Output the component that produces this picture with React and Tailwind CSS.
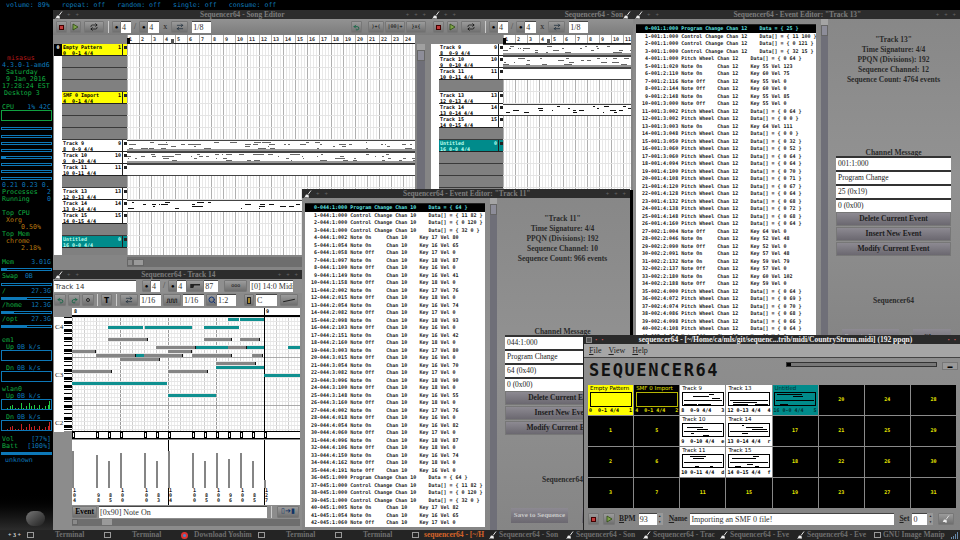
import { Repeat, Search, ArrowRightLeft, Undo2, Redo2 } from "lucide-react";

const mono = "font-['DejaVu_Sans_Mono',monospace]";
const serif = "font-['Liberation_Serif',serif]";

// small seeded random so the pattern scribbles stay the same each render
function rnd(seed) {
    let s = seed;
    return () => {
        s = (s * 9301 + 49297) % 233280;
        return s / 233280;
    };
}

const range = (n) => Array.from({ length: n }, (_, i) => i);

function BrushIcon() {
    return (
        <svg width="8" height="8" viewBox="0 0 8 8" className="shrink-0">
            <path d="M7 0.5 L4 4.5" stroke="#ddd" strokeWidth="1" />
            <path d="M0.5 7.5 L2 4.5 L4.5 5 L5 7.5 Z" fill="#eee" />
            <rect x="0" y="7" width="3" height="1" fill="#777" />
        </svg>
    );
}

function TitleBar({ text, right }) {
    return (
        <div className="h-[9px] shrink-0 bg-[#2c2c2c] flex items-center px-[2px] relative">
            <BrushIcon />
            <span className="text-[#666] text-[6px] ml-[4px] leading-none">+</span>
            <span className="text-[#666] text-[6px] ml-[5px] leading-none">+</span>
            <span className={`${serif} flex-1 font-bold text-[7.4px] leading-[9px] text-[#7c7c7c] whitespace-nowrap ${right ? "text-right" : "text-center"}`}>{text}</span>
            {right ? (
                <BrushIcon />
            ) : (
                <>
                    <span className="text-[#666] text-[6px] mr-[5px] leading-none">+</span>
                    <span className="text-[#666] text-[6px] mr-[5px] leading-none">+</span>
                    <span className="text-[#666] text-[6px] mr-[2px] leading-none">+</span>
                </>
            )}
        </div>
    );
}

function Btn({ className = "", children }) {
    return (
        <div className={`h-[12px] shrink-0 rounded-[1px] bg-linear-to-b from-[#9c9c9c] to-[#6f6f6f] border border-[#777] flex items-center justify-center text-black ${className}`}>
            {children}
        </div>
    );
}

function Field({ className = "", children }) {
    return (
        <div className={`h-[12px] shrink-0 bg-white border-t border-[#444] pl-[1px] ${serif} text-[8px] leading-[11px] text-[#333] whitespace-nowrap overflow-hidden ${className}`}>
            {children}
        </div>
    );
}

function StopBtn({ className = "" }) {
    return (
        <Btn className={className}>
            <div className="w-[5px] h-[5px] bg-[#c23a3a] border border-[#400]" />
        </Btn>
    );
}

function PlayBtn({ className = "" }) {
    return (
        <Btn className={className}>
            <svg width="7" height="8" viewBox="0 0 7 8">
                <path d="M1 1 L6 4 L1 7 Z" fill="#7ea34a" stroke="#2d4a12" strokeWidth="0.8" />
            </svg>
        </Btn>
    );
}

function SongToolbar({ right }) {
    return (
        <div className="h-[16px] shrink-0 flex items-center pl-[3px] bg-linear-to-b from-[#929292] to-[#7c7c7c]">
            <StopBtn className="w-[11px]" />
            <PlayBtn className="w-[11px] ml-[3px]" />
            <Btn className="w-[20px] ml-[3px]"><Repeat size={8} strokeWidth={2} /></Btn>
            <div className="w-[1px] h-[12px] bg-[#ccc] ml-[4px]" />
            <Btn className="w-[9px] ml-[3px] text-[6px]">●</Btn>
            <Field className="w-[10px]">4</Field>
            <span className={`${serif} text-[8px] text-[#444] mx-[3px]`}>/</span>
            <Btn className="w-[9px] text-[6px]">●</Btn>
            <Field className="w-[11px]">4</Field>
            <span className={`${serif} text-[8px] text-[#222] mx-[4px]`}>x</span>
            <Btn className="w-[17px]"><ArrowRightLeft size={8} strokeWidth={2} color="#123" /></Btn>
            <Field className="w-[19px] ml-[4px]">1/8</Field>
            {right}
        </div>
    );
}

function TrackRow({ row }) {
    if (!row.name) {
        return <div className="h-[12px] bg-[#808080] border-b border-[#3a3a3a]" />;
    }
    const bg = row.color === "yellow" ? "bg-[#ffff00]" : row.color === "teal" ? "bg-[#008b8b]" : "bg-white";
    const fg = row.color === "teal" ? "text-[#bfe]" : "text-black";
    return (
        <div className={`h-[12px] flex border-b border-[#222] ${bg} ${fg} ${mono} font-bold text-[5px] leading-[5.5px] whitespace-pre`}>
            <div className="flex-1 pl-[1px] pt-[1px] overflow-hidden">
                <div className="flex justify-between pr-[1px]"><span>{row.name}</span><span>{row.num}</span></div>
                <div>{row.meta}</div>
            </div>
            <div className="w-[5px] border-l border-[#222] flex justify-center pt-[2px]">
                <div className="w-[3px] h-[3px] bg-[#222]" />
            </div>
        </div>
    );
}

function SongGrid({ w, h, rows, seed }) {
    const r = rnd(seed);
    return (
        <svg width={w} height={h} shapeRendering="crispEdges" className="block">
            <rect width={w} height={h} fill="#fff" />
            {range(Math.ceil(w / 3)).map((i) => (
                <rect key={"v" + i} x={i * 3} y="0" width="1" height={h} fill={i % 4 === 0 ? "#b0b0b0" : "#e8e8e8"} />
            ))}
            {range(Math.ceil(h / 12)).map((i) => (
                <rect key={"h" + i} x="0" y={i * 12 + 11} width={w} height="1" fill="#e4e4e4" />
            ))}
            {rows.map((row, idx) => {
                if (!row.strip) return null;
                const y = idx * 12;
                const pieces = [];
                if (row.strip !== "plain") {
                    const count = row.strip === "dense" ? w / 5 : w / 6;
                    for (let i = 0; i < count; i++) {
                        const px = Math.floor(r() * w);
                        const py = y + 2 + 2 * Math.floor(r() * 4);
                        const len = 1 + Math.floor(r() * (row.strip === "dense" ? 7 : 6));
                        pieces.push(<rect key={idx + "p" + i} x={px} y={py} width={len} height="1" fill={row.strip === "dense" ? "#666" : "#111"} />);
                    }
                }
                return (
                    <g key={idx}>
                        <rect x="0" y={y} width={w} height="12" fill="#fff" />
                        <rect x="0" y={y} width={w} height="1" fill="#444" />
                        <rect x="0" y={y + 11} width={w} height="1" fill="#444" />
                        {row.strip === "dense" && <rect x="0" y={y + 9} width={w} height="2" fill="#999" />}
                        {pieces}
                    </g>
                );
            })}
        </svg>
    );
}

function Ruler({ count, extra }) {
    return (
        <div className={`h-[9px] bg-white border-b border-[#222] flex ${mono} font-bold text-[5px] leading-[8px] text-[#333] relative`}>
            {range(count).map((i) => (
                <div key={i} className="w-[12px] shrink-0 border-l border-[#aaa] pl-[1px]">{i + 1}</div>
            ))}
            <div className="absolute left-0 top-[3px] w-[3px] h-[6px] bg-black" />
            {extra && <div className="absolute left-[44px] top-[4px] w-[3px] h-[5px] bg-[#555]" />}
        </div>
    );
}

const row = (name, num, meta, color, strip) => ({ name, num, meta, color, strip });
const EMPTY = {};
const T9 = row("Track 9", "9", "8  0-9 4/4", "white", "dense");
const T10 = row("Track 10", "10", "9  0-10 4/4", "white", "dense");
const T11 = row("Track 11", "11", "10 0-11 4/4", "white", "plain");
const T13 = row("Track 13", "13", "12 0-13 4/4", "white");
const T14 = row("Track 14", "14", "13 0-14 4/4", "white", "sparse");
const T15 = row("Track 15", "15", "14 0-15 4/4", "white");
const UNT = row("Untitled", "0", "16 0-0 4/4", "teal");

const SONG_ROWS = [
    row("Empty Pattern", "1", "0  0-1 4/4", "yellow"), EMPTY, EMPTY, EMPTY,
    row("SMF 0 Import", "1", "4  0-1 4/4", "yellow"), EMPTY, EMPTY, EMPTY,
    T9, T10, T11, EMPTY, T13, T14, T15, EMPTY, UNT, EMPTY,
];
const SONG2_ROWS = [T9, T10, T11, EMPTY, T13, T14, T15, EMPTY, UNT, EMPTY, EMPTY, EMPTY];

function SongEditor() {
    return (
        <div className="absolute left-[53px] top-[10px] w-[377px] h-[260px] flex flex-col bg-[#858585]">
            <TitleBar text="Sequencer64 - Song Editor" />
            <SongToolbar
                right={
                    <div className="ml-auto mr-[4px] flex items-center gap-[1px]">
                        <Btn className="w-[11px]"><Undo2 size={7} color="#164" strokeWidth={3} /></Btn>
                        <Btn className="w-[16px] ml-[5px]"><span className={`${mono} text-[5px]`}>)+(</span></Btn>
                        <Btn className="w-[20px]"><span className={`${mono} text-[5px]`}>|00|+</span></Btn>
                        <Btn className="w-[20px]"><span className={`${mono} text-[5px]`}>}x{"{"}</span></Btn>
                    </div>
                }
            />
            <div className="flex flex-1 min-h-0">
                <div className="w-[74px] shrink-0 flex">
                    <div className="w-[8px] mt-[9px] h-[211px] ml-[1px] bg-white">
                        <div className={`h-[12px] bg-black text-white ${mono} font-bold text-[5px] text-center leading-[7px]`}>0</div>
                    </div>
                    <div className="w-[65px] pt-[9px] h-[220px] overflow-hidden">
                        {SONG_ROWS.map((r, i) => <TrackRow key={i} row={r} />)}
                    </div>
                </div>
                <div className="w-[288px] shrink-0">
                    <Ruler count={24} extra />
                    <SongGrid w={288} h={211} rows={SONG_ROWS} seed={7} />
                    <div className="h-[10px] mt-[2px] bg-[#6e6e6e] flex items-center">
                        <div className="w-[6px] h-[7px] bg-[#8a8a8a] border border-[#666]" />
                        <div className="w-[11px] h-[7px] bg-[#9a9a9a] border border-[#666]" />
                    </div>
                </div>
                <div className="w-[8px] ml-[2px] mt-[9px] h-[221px] bg-[#6f6f78]">
                    <div className="h-[6px] bg-[#a0a0a0]" />
                    <div className="h-[11px] bg-[#8d8d99] border border-[#666]" />
                </div>
            </div>
        </div>
    );
}

function SongEditor2() {
    return (
        <div className="absolute left-[430px] top-[10px] w-[203px] h-[180px] flex flex-col bg-[#858585]">
            <TitleBar text="Sequencer64 - Son" right />
            <SongToolbar />
            <div className="flex flex-1 min-h-0">
                <div className="w-[8px] mt-[9px] ml-[1px] bg-white" />
                <div className="w-[64px] shrink-0 pt-[9px]">
                    {SONG2_ROWS.map((r, i) => <TrackRow key={i} row={r} />)}
                </div>
                <div className="w-[128px] shrink-0">
                    <Ruler count={11} extra />
                    <SongGrid w={128} h={146} rows={SONG2_ROWS} seed={21} />
                </div>
            </div>
        </div>
    );
}

const pad = (s, n) => String(s).padEnd(n, " ");

function on(t, k, v) { return [t, pad("Note On", 11), `Key ${k} Vel ${v}`]; }
function off(t, k) { return [t, pad("Note Off", 11), `Key ${k} Vel 0`]; }
function pw(t, a) { return [t, "Pitch Wheel", `Data[] = { 0 ${a} }`]; }
function cc(t, a, b) { return [t, "Control Change", `Data[] = { ${a} ${b} }`]; }
function pc(t, a) { return [t, "Program Change", `Data = { ${a} }`]; }

const TRACK13 = [
    pc("001:1:000", 25), cc("001:1:000", 11, 100), cc("001:1:000", 0, 121), cc("001:1:000", 32, 15),
    pw("001:1:000", 64), on("001:1:020", 55, 123), on("001:2:110", 60, 75), off("001:2:116", 55),
    off("001:2:144", 60), on("001:2:148", 55, 85), off("001:3:000", 55), pw("001:3:002", 64),
    pw("001:3:002", 0), on("001:3:003", 64, 111), pw("001:3:048", 0), pw("001:3:050", 32),
    pw("001:3:060", 52), pw("001:3:060", 64), pw("001:4:094", 64), pw("001:4:100", 70),
    pw("001:4:108", 71), pw("001:4:120", 67), pw("001:4:128", 64), pw("001:4:132", 68),
    pw("001:4:138", 72), pw("001:4:148", 68), pw("001:4:160", 64), off("002:1:004", 64),
    on("002:2:046", 52, 48), off("002:2:090", 52), on("002:2:091", 57, 48), on("002:2:132", 59, 79),
    off("002:2:137", 57), on("002:2:180", 60, 102), off("002:2:188", 59), pw("002:4:000", 64),
    pw("002:4:072", 69), pw("002:4:074", 70), pw("002:4:086", 68), pw("002:4:098", 66),
    pw("002:4:108", 64), off("002:4:150", 60),
];

const TRACK11 = [
    pc("044:1:000", 64), cc("044:1:000", 11, 82), cc("044:1:000", 0, 120), cc("044:1:000", 32, 0),
    on("044:1:002", 17, 80), on("044:1:054", 16, 65), off("044:1:058", 17), on("044:1:097", 18, 87),
    off("044:1:100", 16), on("044:1:149", 16, 41), off("044:1:158", 18), on("044:2:002", 17, 76),
    off("044:2:015", 18), on("044:2:054", 16, 74), off("044:2:082", 17), on("044:2:098", 18, 93),
    off("044:2:103", 16), on("044:2:151", 16, 42), off("044:2:160", 18), on("044:3:003", 17, 80),
    off("044:3:015", 16), on("044:3:054", 16, 70), off("044:3:082", 17), on("044:3:096", 18, 90),
    off("044:3:100", 18), on("044:3:148", 16, 55), off("044:3:160", 18), on("044:4:002", 17, 76),
    off("044:4:018", 16), on("044:4:054", 16, 82), off("044:4:060", 17), on("044:4:096", 18, 87),
    off("044:4:106", 18), on("044:4:150", 16, 74), off("044:4:162", 18), off("044:4:191", 16),
    pc("045:1:000", 64), cc("045:1:000", 11, 82), cc("045:1:000", 0, 120), cc("045:1:000", 32, 0),
    on("045:1:005", 17, 82), on("045:1:054", 16, 65), off("045:1:060", 17),
];

function PanelBtn({ children }) {
    return (
        <div className={`h-[14px] shrink-0 mb-[1px] bg-linear-to-b from-[#8d8a92] to-[#6b6870] border border-[#777] ${serif} font-bold text-[7.5px] leading-[12px] text-center text-[#1c1c1c] whitespace-nowrap`}>
            {children}
        </div>
    );
}

function EventEditor({ className, title, rows, chan, info, msg }) {
    return (
        <div className={`absolute flex flex-col bg-linear-to-b from-[#878787] via-[#929292] to-[#858585] ${className}`}>
            <TitleBar text={title} />
            <div className="flex flex-1 min-h-0 overflow-hidden">
                <div className={`w-[180px] h-fit shrink-0 ml-[3px] mt-[5px] border-t border-[#222] bg-white ${mono} font-bold text-[5px] leading-[7.5px] whitespace-pre text-[#1d1d1d]`}>
                    {rows.map((r, i) => (
                        <div key={i} className={`h-[7.5px] overflow-hidden ${i === 0 ? "bg-black text-[#5fe0e0]" : ""}`}>
                            {`${String(i).padStart(4, " ")}-${r[0]} ${r[1]} Chan ${chan}    ${r[2]}`}
                        </div>
                    ))}
                </div>
                <div className="w-[7px] ml-[5px] bg-[#6f6f78] shrink-0">
                    <div className="h-[6px] bg-[#a4a4a4]" />
                    <div className="h-[11px] bg-[#8d8d99] border border-[#666]" />
                </div>
                <div className="ml-[8px] w-[115px] shrink-0 flex flex-col">
                    <div className={`${serif} h-[131px] shrink-0 pt-[16px] text-center text-[7.5px] leading-[10px] text-[#2a2a2a] whitespace-nowrap font-bold`}>
                        {info.map((l) => <div key={l}>{l}</div>)}
                    </div>
                    <div className={`${serif} h-[6px] shrink-0 text-center text-[7.5px] leading-[6px] font-bold text-[#2a2a2a] whitespace-nowrap`}>Channel Message</div>
                    {msg.map((m) => (
                        <div key={m} className={`h-[14px] shrink-0 bg-white border-t-2 border-[#333] pl-[2px] ${serif} text-[7.5px] leading-[12px] text-[#222]`}>{m}</div>
                    ))}
                    <PanelBtn>Delete Current Event</PanelBtn>
                    <PanelBtn>Insert New Event</PanelBtn>
                    <PanelBtn>Modify Current Event</PanelBtn>
                    <div className={`${serif} mt-[39px] shrink-0 text-center text-[7.5px] font-bold leading-[10px] text-[#2a2a2a]`}>Sequencer64</div>
                    <div className="mt-[23px] shrink-0 flex ml-[6px] gap-[14px]">
                        <div className={`w-[57px] h-[15px] bg-linear-to-b from-[#8d8a92] to-[#6b6870] ${serif} font-bold text-[7px] leading-[15px] text-center text-[#c8c8c8] whitespace-nowrap`}>Save to Sequence</div>
                        <div className={`w-[38px] h-[15px] bg-linear-to-b from-[#8d8a92] to-[#6b6870] ${serif} font-bold text-[7px] leading-[15px] text-center text-[#222]`}>Close</div>
                    </div>
                </div>
            </div>
        </div>
    );
}

const NOTES = [
    [228, 239, 319, 1], [240, 264, 319, 1],
    [108, 143, 327, 1], [145, 192, 327, 1], [204, 239, 327, 1],
    [108, 148, 339, 0], [204, 232, 339, 0], [240, 260, 339, 0],
    [156, 196, 347, 0], [196, 228, 347, 1], [228, 247, 347, 0], [247, 264, 347, 1], [288, 300, 347, 1],
    [72, 96, 351, 0], [168, 192, 351, 0],
    [96, 136, 355, 0], [136, 144, 355, 1], [144, 183, 355, 0], [192, 232, 355, 0], [252, 263, 355, 0],
    [120, 160, 359, 0], [216, 256, 363, 0], [216, 264, 367, 1],
    [72, 112, 371, 0], [168, 208, 371, 0], [264, 300, 375, 1],
    [72, 167, 383, 1], [168, 216, 395, 1],
];

const MARKS = [73, 97, 109, 121, 145, 157, 169, 193, 205, 217, 229, 241, 253, 265];
const LEVELS = [
    [451, "104"], [455, "98"], [461, "85"], [453, "100"], [453, "100"], [461, "83"], [451, "104"],
    [453, "100"], [461, "85"], [453, "100"], [459, "96"], [453, "100"], [461, "85"], [480, "127"],
];

function PianoRoll() {
    const W = 228;
    const H = 114;
    const top = 317;
    return (
        <svg width={W} height={H} shapeRendering="crispEdges" className="block">
            <rect width={W} height={H} fill="#fff" />
            {range(76).map((i) => (
                <rect key={"v" + i} x={i * 3} y="0" width="1" height={H} fill={i % 16 === 0 ? "#999" : i % 4 === 0 ? "#cfcfcf" : "#ececec"} />
            ))}
            {range(29).map((i) => (
                <rect key={"h" + i} x="0" y={i * 4} width={W} height="1" fill={i === 10 || i === 22 ? "#aaa" : "#e6e6e6"} />
            ))}
            <rect x="192" y="0" width="1" height={H} fill="#000" />
            {NOTES.map(([a, b, y, teal], i) => (
                <g key={i}>
                    <rect x={a - 72} y={y - top - 1} width={b - a} height="3" fill={teal ? "#0f9090" : "#858585"} />
                    <rect x={b - 73} y={y - top - 1} width="1" height="3" fill={teal ? "#0f9090" : "#111"} />
                </g>
            ))}
        </svg>
    );
}

function PianoKeys() {
    // black and white keys down the roll, one key every 4px
    const blacks = [1, 3, 5, 8, 10, 13, 15, 17, 20, 22, 25, 27];
    return (
        <svg width="8" height="114" shapeRendering="crispEdges" className="block">
            <rect width="8" height="114" fill="#fff" />
            {range(29).map((i) => (
                <rect key={i} x="0" y={i * 4} width="8" height={blacks.includes(i) ? 3 : 1} fill="#000" />
            ))}
        </svg>
    );
}

function DataPane() {
    return (
        <div className="h-[65px] w-[228px] bg-white relative">
            <div className="absolute left-[96px] top-0 w-[1px] h-full bg-black" />
            <div className="absolute left-[192px] top-0 w-[1px] h-full bg-black" />
            {MARKS.map((x, i) => {
                const [top, val] = LEVELS[i];
                return (
                    <div key={x} className="absolute top-0 h-full w-[8px]" style={{ left: x - 73 }}>
                        <div className="absolute left-0 bottom-[17px] w-[2px] bg-[#858585]" style={{ height: 488 - top }} />
                        <div className={`absolute left-[1px] bottom-[2px] ${mono} font-bold text-[5px] leading-[5px] text-[#222] text-center`}>
                            {val.split("").map((d, j) => <div key={j}>{d}</div>)}
                        </div>
                    </div>
                );
            })}
        </div>
    );
}

function SeqEditor() {
    return (
        <div className="absolute left-[53px] top-[270px] w-[249px] h-[260px] flex flex-col bg-[#8c8c8c]">
            <TitleBar text="Sequencer64 - Track 14" />
            <div className="h-[14px] shrink-0 flex items-center pl-[1px] bg-[#8f8f8f]">
                <Field className="w-[82px]"><span className={`font-['DejaVu_Sans',sans-serif] text-[7px]`}>Track 14</span></Field>
                <Btn className="w-[9px] ml-[6px] text-[6px]">●</Btn>
                <Field className="w-[9px]">4</Field>
                <span className={`${serif} text-[8px] text-[#444] mx-[3px]`}>/</span>
                <Btn className="w-[9px] text-[6px]">●</Btn>
                <Field className="w-[9px]">4</Field>
                <Btn className="w-[18px]"><div className="w-[10px] h-[4px] bg-[#222] [clip-path:polygon(0_0,100%_0,100%_40%,40%_40%,30%_100%,0_100%)]" /></Btn>
                <Field className="w-[14px]">87</Field>
                <Btn className="w-[23px] ml-[6px]"><span className={`${mono} text-[5px]`}>ooo</span></Btn>
                <Field className="w-[43px] ml-[3px]">[0] 14:0 Midi T</Field>
            </div>
            <div className="h-[14px] shrink-0 flex items-center pl-[1px] bg-[#8a8a8a]">
                <Btn className="w-[12px]"><Undo2 size={7} color="#164" strokeWidth={3} /></Btn>
                <Btn className="w-[12px] ml-[2px]"><Redo2 size={7} color="#164" strokeWidth={3} /></Btn>
                <Btn className="w-[12px] ml-[2px]"><div className="w-[4px] h-[4px] rounded-full border border-[#222]" /></Btn>
                <div className="w-[1px] h-[12px] bg-[#ccc] ml-[3px]" />
                <Btn className="w-[11px] ml-[3px] text-[9px] font-bold">T</Btn>
                <div className="w-[1px] h-[12px] bg-[#ccc] ml-[4px]" />
                <Btn className="w-[18px] ml-[3px]"><ArrowRightLeft size={8} strokeWidth={2} color="#123" /></Btn>
                <Field className="w-[21px] ml-[2px]">1/16</Field>
                <Btn className="w-[18px] ml-[2px]"><span className={`${mono} text-[6px]`}>ЛЛЛ</span></Btn>
                <Field className="w-[21px] ml-[2px]">1/16</Field>
                <Btn className="w-[11px] ml-[2px]"><Search size={8} color="#137" strokeWidth={3} /></Btn>
                <Field className="w-[19px]">1:2</Field>
                <Btn className="w-[10px] ml-[8px]"><div className="w-[4px] h-[7px] bg-[#a8862a] border border-[#222]" /></Btn>
                <Field className="w-[21px] ml-[2px]">C</Field>
                <Btn className="w-[18px] ml-[3px]"><div className="w-[12px] h-[1px] bg-[#222] -rotate-12" /></Btn>
            </div>
            <div className="flex flex-1 min-h-0">
                <div className="w-[19px] shrink-0 pt-[10px]">
                    <div className="flex h-[115px] pl-[1px]">
                        <div className={`w-[10px] bg-white ${serif} text-[7px] text-[#222] relative`}>
                            <span className="absolute left-[1px] top-[7px] leading-none">C4</span>
                            <span className="absolute left-[1px] top-[55px] leading-none">C3</span>
                            <span className="absolute left-[1px] top-[103px] leading-none">C2</span>
                        </div>
                        <PianoKeys />
                    </div>
                </div>
                <div className="w-[228px] shrink-0 pt-[1px]">
                    <div className={`h-[9px] bg-white border-b-2 border-black flex ${mono} font-bold text-[5px] leading-[7px]`}>
                        <div className="w-[192px] pl-[2px]">8</div>
                        <div className="flex-1 border-l border-black pl-[1px]">9</div>
                    </div>
                    <PianoRoll />
                    <div className="h-[8px] border-y border-black bg-white relative">
                        {MARKS.map((x) => (
                            <div key={x} className="absolute top-0 w-[3px] h-[6px] border border-black bg-white" style={{ left: x - 73 }} />
                        ))}
                    </div>
                    <div className="h-[1px]" />
                    <DataPane />
                    <div className="h-[13px] flex items-center">
                        <Btn className={`w-[25px] ${serif} font-bold text-[7.5px]`}>Event</Btn>
                        <Field className="w-[168px] ml-[2px]">[0x90] Note On</Field>
                        <div className="w-[1px] h-[12px] bg-[#ccc] ml-[4px]" />
                        <Btn className="w-[22px] ml-[5px]"><span className="text-[7px] text-[#136]">▯➔▮</span></Btn>
                    </div>
                    <div className="h-[7px] mt-[1px] bg-[#6e6e6e] flex">
                        <div className="w-[6px] h-[6px] bg-[#8a8a8a] border border-[#666]" />
                        <div className="w-[10px] h-[6px] ml-[24px] bg-[#9a9a9a]" />
                    </div>
                </div>
                <div className="flex-1" />
            </div>
        </div>
    );
}

function MiniPattern({ seed, dark }) {
    const r = rnd(seed);
    const stripes = range(7).map(() => [Math.floor(r() * 30), 2 + 2 * Math.floor(r() * 6), 2 + Math.floor(r() * 16)]);
    return (
        <svg width="42" height="14" shapeRendering="crispEdges" className="block">
            <rect x="0.5" y="0.5" width="41" height="13" fill={dark ? "#008b8b" : "#fff"} stroke="#000" />
            {stripes.map(([x, y, w], i) => <rect key={i} x={x + 2} y={y} width={w} height="1" fill="#000" />)}
            <rect x="2" y="8" width="38" height="1" fill="#000" />
        </svg>
    );
}

function PatternCell({ cell }) {
    if (typeof cell === "number") {
        return (
            <div className={`bg-black flex items-center justify-center ${mono} font-bold text-[5px] text-[#e8e800]`}>{cell}</div>
        );
    }
    const theme = cell.kind === "yellow"
        ? "bg-[#ffff00] text-black"
        : cell.kind === "smf"
            ? "bg-black text-[#e0e000]"
            : cell.kind === "teal"
                ? "bg-[#008b8b] text-[#033]"
                : "bg-white text-black";
    const box = cell.kind === "yellow" ? "border-black" : "border-[#b8b800]";
    return (
        <div className={`${theme} flex flex-col px-[1px] overflow-hidden`}>
            <div className={`font-['DejaVu_Sans',sans-serif] text-[5.5px] leading-[7px] pl-[1px] whitespace-nowrap`}>{cell.name}</div>
            <div className="h-[15px] flex justify-center">
                {cell.seed ? <MiniPattern seed={cell.seed} dark={cell.kind === "teal"} /> : <div className={`w-[42px] h-[15px] border ${box}`} />}
            </div>
            <div className={`${mono} font-bold text-[5px] leading-[7px] flex justify-between whitespace-pre`}>
                <span>{cell.meta}</span><span>{cell.key}</span>
            </div>
        </div>
    );
}

// the main window fills its slots column by column, see grid-flow-col
const CELLS = [
    { name: "Empty Pattern", meta: "0  0-1 4/4", key: "1", kind: "yellow" }, 1, 2, 3,
    { name: "SMF 0 Import", meta: "4  0-1 4/4", key: "2", kind: "smf" }, 5, 6, 7,
    { name: "Track 9", meta: "8  0-9 4/4", key: "3", seed: 3 },
    { name: "Track 10", meta: "9  0-10 4/4", key: "e", seed: 11 },
    { name: "Track 11", meta: "10 0-11 4/4", key: "d", seed: 17 }, 11,
    { name: "Track 13", meta: "12 0-13 4/4", key: "4", seed: 23 },
    { name: "Track 14", meta: "13 0-14 4/4", key: "r", seed: 31 },
    { name: "Track 15", meta: "14 0-15 4/4", key: "f", seed: 41 }, 15,
    { name: "Untitled", meta: "16 0-0 4/4", key: "5", seed: 53, kind: "teal" }, 17, 18, 19,
    20, 21, 22, 23, 24, 25, 26, 27, 28, 29, 30, 31,
];

function Spin() {
    return (
        <div className="w-[6px] h-[12px] bg-[#999] flex flex-col items-center justify-around text-[3px] leading-none text-[#222]">
            <span>▲</span><span>▼</span>
        </div>
    );
}

function MainWindow() {
    return (
        <div className="absolute left-[583px] top-[335px] w-[377px] h-[195px] flex flex-col bg-linear-to-b from-[#8f8f8f] to-[#858585] border-l border-[#222]">
            <div className="h-[9px] shrink-0 bg-[#2a2a2a] flex items-center px-[2px]">
                <div className="w-[6px] h-[6px] border border-[#888] bg-[#555]" />
                <span className="text-[#c55] text-[6px] ml-[3px] leading-none">•</span>
                <span className="text-[#c55] text-[6px] ml-[4px] leading-none">•</span>
                <span className={`${serif} flex-1 text-center font-bold text-[7.5px] leading-[9px] text-[#eee] whitespace-nowrap`}>sequencer64 - [~/Home/ca/mls/git/sequenc...trib/midi/CountryStrum.midi] (192 ppqn)</span>
                <span className="text-[#c55] text-[6px] mr-[4px] leading-none">•</span>
                <span className="text-[#c55] text-[6px] mr-[2px] leading-none">•</span>
            </div>
            <div className={`h-[14px] shrink-0 flex items-center gap-[7px] pl-[5px] bg-[#a6a6a6] border-b border-[#444] ${serif} text-[8px] text-[#222]`}>
                <span><u>F</u>ile</span><span><u>V</u>iew</span><span><u>H</u>elp</span>
            </div>
            <div className="h-[27px] shrink-0 flex items-center pl-[5px] pb-[2px] relative">
                <span className={`${mono} font-bold text-[17px] leading-none tracking-[1.6px] text-[#111]`}>SEQUENCER64</span>
                <div className="absolute left-[202px] top-[4px] w-[151px] h-[5px] bg-[#777] border border-[#333]">
                    <div className="w-[4px] h-full bg-black" />
                </div>
                <div className="absolute left-[358px] top-[4px] w-[16px] h-[8px] bg-[#999] border border-[#777] text-[5px] leading-[6px] text-center">▬</div>
            </div>
            <div className="grid grid-flow-col grid-rows-4 grid-cols-8 gap-[1px] w-[368px] h-[123px] ml-[4px] shrink-0">
                {CELLS.map((c, i) => <PatternCell key={i} cell={c} />)}
            </div>
            <div className={`flex items-center mt-[5px] pl-[4px] ${serif} text-[7.5px] text-[#222]`}>
                <StopBtn className="w-[11px]" />
                <PlayBtn className="w-[12px] ml-[4px]" />
                <span className="ml-[4px] font-bold"><u>B</u>PM</span>
                <Field className="w-[18px] ml-[3px]">93</Field>
                <Spin />
                <span className="ml-[6px] font-bold"><u>N</u>ame</span>
                <Field className="w-[204px] ml-[3px]">Importing an SMF 0 file!</Field>
                <span className="ml-[5px] font-bold"><u>S</u>et</span>
                <Field className="w-[15px] ml-[3px]">0</Field>
                <Spin />
                <Btn className="w-[16px] ml-[5px]"><BrushIcon /></Btn>
            </div>
        </div>
    );
}

const CONKY = [
    { t: "misasus", c: "red", cls: "pl-[7px]" },
    { t: "4.3.0-1-amd6", c: "blue", cls: "pl-[2px]" },
    { t: "Saturday", c: "green", cls: "pl-[6px]" },
    { t: "9 Jan 2016", c: "green", cls: "pl-[6px]" },
    { t: "17:28:24 EST", c: "green", cls: "pl-[2px]" },
    { t: "Desktop 3", c: "green", cls: "pl-[4px]" },
    {},
    { t: "CPU", r: "1% 42C" },
    { box: "green" },
    {},
    ...range(8).map((i) => ({ bar: i === 4 ? 8 : 0 })),
    { t: "0.21 0.23 0.", c: "blue", cls: "pl-[2px]" },
    { t: "Processes", r: "2" },
    { t: "Running", r: "0" },
    {},
    { t: "Top CPU", c: "green" },
    { t: "Xorg", c: "amber", cls: "pl-[6px]" },
    { t: "0.50%", c: "amber", cls: "pl-[21px]" },
    { t: "Top Mem", c: "green" },
    { t: "chrome", c: "amber", cls: "pl-[6px]" },
    { t: "2.18%", c: "amber", cls: "pl-[21px]" },
    {},
    { t: "Mem", r: "3.01G" },
    { bar: 10 },
    { t: "Swap", r: "0B", rc: "pl-[7px]" },
    { bar: 0 },
    { t: "/", r: "27.3G" },
    { bar: 50 },
    { t: "/home", r: "12.3G" },
    { bar: 25 },
    { t: "/opt", r: "27.3G" },
    { bar: 50 },
    {},
    { t: "em1", c: "green" },
    { t: "Up", r: "0B k/s", cls: "pl-[6px]", rc: "pl-[3px]" },
    { box: "blue" },
    {},
    { t: "Dn", r: "0B k/s", cls: "pl-[6px]", rc: "pl-[3px]" },
    { box: "blue" },
    {},
    { t: "wlan0", c: "green" },
    { t: "Up", r: "0B k/s", cls: "pl-[6px]", rc: "pl-[3px]" },
    { box: "blue", spark: "#22cc44" },
    {},
    { t: "Dn", r: "0B k/s", cls: "pl-[6px]", rc: "pl-[3px]" },
    { box: "blue", spark: "#cc2222" },
    {},
    { t: "Vol", r: "[77%]" },
    { t: "Batt", r: "[100%]" },
    { bar: 100 },
    { t: "unknown", c: "blue", cls: "pl-[5px]" },
];

const TONE = { red: "text-[#b01818]", blue: "text-[#0d78b8]", green: "text-[#10b040]", amber: "text-[#b87a10]" };

function Spark({ color }) {
    const hs = [1, 2, 3, 1, 1, 4, 1, 2, 4, 2, 3, 1, 3, 1, 2, 3];
    return (
        <svg width="49" height="9" shapeRendering="crispEdges" className="block">
            {hs.map((h, i) => <rect key={i} x={5 + i * 2.7} y={9 - h * 1.5} width="1" height={h * 1.5} fill={color} />)}
            <rect x="47" y="1" width="1" height="8" fill={color} />
        </svg>
    );
}

function ConkyRow({ item }) {
    if (item.box) {
        return (
            <div className="h-[11px] -mt-[1px] relative">
                <div className={`absolute left-[1px] top-0 w-[51px] h-[11px] border overflow-hidden ${item.box === "green" ? "border-[#10a040]" : "border-[#0d78b8]"}`}>
                    {item.spark && <Spark color={item.spark} />}
                </div>
            </div>
        );
    }
    if (item.bar !== undefined) {
        return (
            <div className="flex items-center pl-[1px]">
                <div className="w-[51px] h-[3px] border border-[#0d78b8] relative">
                    <div className="absolute left-0 top-0 h-full bg-[#0d78b8]" style={{ width: `${item.bar}%` }} />
                </div>
            </div>
        );
    }
    if (!item.t) return <div />;
    return (
        <div className={`flex whitespace-pre pl-[2px] ${item.r ? "justify-between pr-[2px]" : ""} ${item.cls || ""} ${TONE[item.c || "green"]}`}>
            <span>{item.t}</span>
            {item.r && <span className={`text-[#0d78b8] ${item.rc || ""} ${item.rc ? "flex-1 text-left" : ""}`}>{item.r}</span>}
        </div>
    );
}

function Conky() {
    return (
        <div className={`absolute left-0 top-[10px] w-[53px] h-[520px] bg-black overflow-hidden ${mono} text-[6.6px] leading-[7px]`}>
            <div className="pt-[45px] grid auto-rows-[7.05px]">
                {CONKY.map((item, i) => <ConkyRow key={i} item={item} />)}
            </div>
            <div className="absolute left-0 bottom-0 w-full h-[40px] bg-linear-to-b from-[#000] to-[#2c2c2c]" />
            <div className="absolute left-[26px] bottom-[4px] w-[19px] h-[15px] rounded-full bg-linear-to-br from-[#777] to-[#222]" />
        </div>
    );
}

const TOP_ITEMS = ["volume: 89%", "repeat: off", "random: off", "single: off", "consume: off"];

const TASKS = [
    { label: "Terminal", icon: "term", gap: "ml-[21px]" },
    { label: "Terminal", icon: "term", gap: "ml-[21px]" },
    { label: "Download Yoshim", icon: "chrome", gap: "ml-[6px]" },
    { label: "Terminal", icon: "term", gap: "ml-[21px]" },
    { label: "Terminal", icon: "term", gap: "ml-[21px]" },
    { label: "sequencer64 - [~/H", icon: "term", gap: "ml-[5px]", active: true },
    { label: "Sequencer64 - Son", icon: "brush", gap: "ml-[2px]" },
    { label: "Sequencer64 - Son", icon: "brush", gap: "ml-[2px]" },
    { label: "Sequencer64 - Trac", icon: "brush", gap: "ml-[2px]" },
    { label: "Sequencer64 - Eve", icon: "brush", gap: "ml-[2px]" },
    { label: "Sequencer64 - Eve", icon: "brush", gap: "ml-[2px]" },
    { label: "GNU Image Manip", icon: "term", gap: "ml-[2px]" },
];

function TaskIcon({ kind }) {
    if (kind === "chrome") {
        return <div className="w-[7px] h-[7px] rounded-full border-2 border-[#d33] bg-[#48c] shrink-0" />;
    }
    if (kind === "brush") return <BrushIcon />;
    return <div className="w-[7px] h-[6px] border border-[#999] shrink-0" />;
}

function TaskBar() {
    return (
        <div className={`absolute left-0 top-[530px] w-[960px] h-[10px] bg-[#242424] flex items-center ${serif} font-bold text-[7.5px] leading-none text-[#6e6e6e]`}>
            <div className="w-[25px] shrink-0 pl-[8px] text-[#ddd] text-[6px] whitespace-pre">+ 3 +</div>
            {TASKS.map((t, i) => (
                <div key={i} className="w-[77px] shrink-0 flex items-center pl-[2px] whitespace-nowrap">
                    <TaskIcon kind={t.icon} />
                    <span className={`${t.gap} ${t.active ? "text-[#d8642a]" : ""}`}>{t.label}</span>
                </div>
            ))}
            <div className="flex items-end gap-[1px] h-[7px] ml-[2px]">
                <div className="w-[1px] h-[2px] bg-[#68a]" />
                <div className="w-[1px] h-[3px] bg-[#68a]" />
                <div className="w-[1px] h-[5px] bg-[#68a]" />
                <div className="w-[1px] h-[7px] bg-[#68a]" />
            </div>
        </div>
    );
}

export default function App() {
    return (
        <div className="relative w-[960px] h-[540px] overflow-hidden bg-black">
            <div className={`absolute left-0 top-0 h-[10px] flex gap-[12px] pl-[6px] ${mono} text-[6.6px] leading-[10px] text-[#0d78b8] whitespace-pre`}>
                {TOP_ITEMS.map((t) => <span key={t}>{t}</span>)}
            </div>
            <Conky />
            <SongEditor />
            <SongEditor2 />
            <SeqEditor />
            <EventEditor
                className="left-[633px] top-[10px] w-[327px] h-[325px]"
                title={'Sequencer64 - Event Editor: "Track 13"'}
                rows={TRACK13}
                chan={12}
                info={['"Track 13"', "Time Signature: 4/4", "PPQN (Divisions): 192", "Sequence Channel: 12", "Sequence Count: 4764 events"]}
                msg={["001:1:000", "Program Change", "25 (0x19)", "0 (0x00)"]}
            />
            <EventEditor
                className="left-[302px] top-[189px] w-[328px] h-[341px]"
                title={'Sequencer64 - Event Editor: "Track 11"'}
                rows={TRACK11}
                chan={10}
                info={['"Track 11"', "Time Signature: 4/4", "PPQN (Divisions): 192", "Sequence Channel: 10", "Sequence Count: 966 events"]}
                msg={["044:1:000", "Program Change", "64 (0x40)", "0 (0x00)"]}
            />
            <MainWindow />
            <TaskBar />
        </div>
    );
}
